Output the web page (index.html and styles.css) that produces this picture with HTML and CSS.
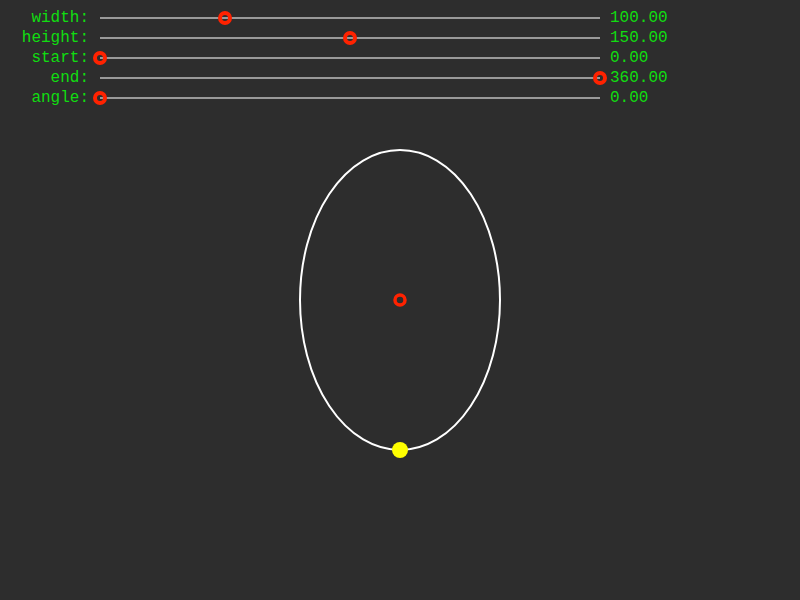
FILE: index.html
```html
<!DOCTYPE html>
<html>
<head>
<meta charset="utf-8">
<link rel="stylesheet" href="styles.css">
</head>
<body>
<div class="controls">
  <div class="row">
    <span class="label">width:</span>
    <div class="slider"><div class="track"></div><div class="knob" style="left:25%"></div></div>
    <span class="value">100.00</span>
  </div>
  <div class="row">
    <span class="label">height:</span>
    <div class="slider"><div class="track"></div><div class="knob" style="left:50%"></div></div>
    <span class="value">150.00</span>
  </div>
  <div class="row">
    <span class="label">start:</span>
    <div class="slider"><div class="track"></div><div class="knob" style="left:0%"></div></div>
    <span class="value">0.00</span>
  </div>
  <div class="row">
    <span class="label">end:</span>
    <div class="slider"><div class="track"></div><div class="knob" style="left:100%"></div></div>
    <span class="value">360.00</span>
  </div>
  <div class="row">
    <span class="label">angle:</span>
    <div class="slider"><div class="track"></div><div class="knob" style="left:0%"></div></div>
    <span class="value">0.00</span>
  </div>
</div>
<svg class="canvas" width="800" height="492" viewBox="0 108 800 492">
  <ellipse cx="400" cy="300" rx="100" ry="150" fill="none" stroke="#ffffff" stroke-width="2"/>
  <circle cx="400" cy="300" r="5" fill="none" stroke="#ff2200" stroke-width="3.5"/>
  <circle cx="400" cy="450" r="8" fill="#ffff00"/>
</svg>
</body>
</html>
```
FILE: styles.css
```css
html, body {
  margin: 0;
  padding: 0;
  background: #2d2d2d;
  width: 800px;
  height: 600px;
  overflow: hidden;
}
.controls {
  padding-top: 8px;
  font-family: "Courier New", "Liberation Mono", monospace;
  font-size: 16px;
  color: #11dd11;
}
.row {
  display: grid;
  grid-template-columns: 89px 500px auto;
  height: 20px;
  align-items: center;
}
.label {
  text-align: right;
  line-height: 20px;
}
.slider {
  position: relative;
  height: 20px;
  margin-left: 11px;
  margin-right: -11px;
}
.track {
  position: absolute;
  left: 0;
  right: 0;
  top: 9px;
  height: 2px;
  background: #999999;
}
.knob {
  position: absolute;
  top: 10px;
  width: 14px;
  height: 14px;
  box-sizing: border-box;
  border: 4px solid #ff2200;
  border-radius: 50%;
  transform: translate(-50%, -50%);
}
.value {
  padding-left: 21px;
  line-height: 20px;
  white-space: nowrap;
}
.canvas {
  display: block;
}
```
